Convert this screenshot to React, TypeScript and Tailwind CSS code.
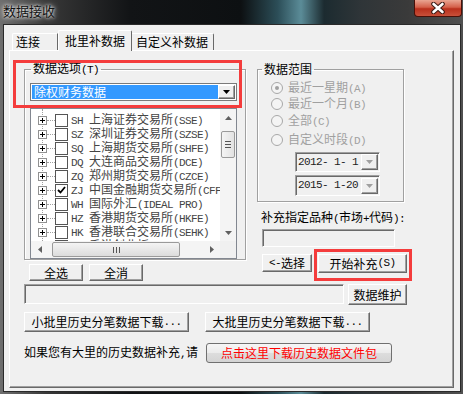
import clsx from 'clsx';
import type { ReactNode } from 'react';

const exchanges = [
  { code: 'SH', name: '上海证券交易所', en: '(SSE)' },
  { code: 'SZ', name: '深圳证券交易所', en: '(SZSE)' },
  { code: 'SQ', name: '上海期货交易所', en: '(SHFE)' },
  { code: 'DQ', name: '大连商品交易所', en: '(DCE)' },
  { code: 'ZQ', name: '郑州期货交易所', en: '(CZCE)' },
  { code: 'ZJ', name: '中国金融期货交易所', en: '(CFFEX)', checked: true },
  { code: 'WH', name: '国际外汇', en: '(IDEAL PRO)' },
  { code: 'HZ', name: '香港期货交易所', en: '(HKFE)' },
  { code: 'HK', name: '香港联合交易所', en: '(SEHK)' },
  { code: 'HG', name: '香港创业板', en: '(GEM)' },
];

const ranges = [
  { label: '最近一星期', key: '(A)', checked: true, mt: 'mt-[5px]' },
  { label: '最近一个月', key: '(B)', mt: 'mt-[2px]' },
  { label: '全部', key: '(C)', mt: 'mt-[3px]' },
  { label: '自定义时段', key: '(D)', mt: 'mt-[5px]' },
];

const raised =
  'bg-[#f0f0f0] border border-t-white border-l-white border-r-[#696969] border-b-[#696969] shadow-[inset_-1px_-1px_0_#a0a0a0]';
const sunken =
  'border border-t-[#a0a0a0] border-l-[#a0a0a0] border-r-white border-b-white shadow-[inset_1px_1px_0_#696969]';

function Lat({ children, className }: { children: ReactNode; className?: string }) {
  return (
    <span className={clsx("font-['Liberation_Mono',monospace] text-[11px] tracking-[-0.6px]", className)}>
      {children}
    </span>
  );
}

function Btn({ className, children }: { className?: string; children: ReactNode }) {
  return (
    <div className={clsx(raised, 'flex items-center justify-center leading-none text-black shrink-0', className)}>
      {children}
    </div>
  );
}

function Arrow({ dir, color = '#404040' }: { dir: 'up' | 'down' | 'left' | 'right'; color?: string }) {
  const pts = {
    up: '0,4 3.5,0 7,4',
    down: '0,0 7,0 3.5,4',
    left: '4,0 4,7 0,3.5',
    right: '0,0 0,7 4,3.5',
  }[dir];
  const vertical = dir === 'up' || dir === 'down';
  return (
    <svg width={vertical ? 7 : 4} height={vertical ? 4 : 7} viewBox={vertical ? '0 0 7 4' : '0 0 4 7'}>
      <polygon points={pts} fill={color} />
    </svg>
  );
}

function TreeRow({ code, name, en, checked }: { code: string; name: string; en: string; checked?: boolean }) {
  return (
    <div className="flex items-center h-[14px] whitespace-nowrap">
      <span className="relative w-[9px] h-[9px] border border-[#919191] bg-white shrink-0 flex items-center justify-center">
        <svg width="5" height="5" viewBox="0 0 5 5">
          <path d="M0 2.5H5M2.5 0V5" stroke="#000" strokeWidth="1" />
        </svg>
      </span>
      <span className="w-[8px] border-t border-dotted border-[#a0a0a0] shrink-0" />
      <span className="w-[13px] h-[13px] border border-[#555] bg-white shrink-0 flex items-center justify-center">
        {checked && (
          <svg width="9" height="8" viewBox="0 0 9 8">
            <path d="M1 4l2.5 2.5L8 1" stroke="#000" strokeWidth="1.8" fill="none" />
          </svg>
        )}
      </span>
      <span className="ml-[3px] text-[#444] leading-[14px]">
        <Lat>{code} </Lat>
        {name}
        <Lat>{en}</Lat>
      </span>
    </div>
  );
}

function TreeList() {
  return (
    <div className="mt-[7px] w-[207px] h-[151px] border border-[#828790] bg-white flex flex-col">
      <div className="flex h-[132px]">
        <div className="relative flex-1 overflow-hidden pt-[4px] pl-[7px]">
          <span className="absolute left-[11px] top-0 bottom-0 border-l border-dotted border-[#a0a0a0]" />
          {exchanges.map((e) => (
            <TreeRow key={e.code} {...e} />
          ))}
        </div>
        <div className="w-[16px] bg-[#f4f4f4] flex flex-col items-center">
          <div className="h-[17px] flex items-center justify-center">
            <Arrow dir="up" color="#606060" />
          </div>
          <div className="mt-[5px] w-[14px] h-[27px] rounded-[2px] border border-[#9a9a9a] bg-[linear-gradient(90deg,#f4f4f4,#e2e2e2)] flex flex-col items-center justify-center gap-[2px]">
            <span className="w-[6px] h-px bg-[#555]" />
            <span className="w-[6px] h-px bg-[#555]" />
            <span className="w-[6px] h-px bg-[#555]" />
          </div>
          <div className="flex-1" />
          <div className="h-[17px] flex items-center justify-center">
            <Arrow dir="down" color="#606060" />
          </div>
        </div>
      </div>
      <div className="flex h-[17px]">
        <div className="flex-1 bg-[#f4f4f4] flex items-center">
          <div className="w-[17px] flex items-center justify-center">
            <Arrow dir="left" color="#606060" />
          </div>
          <div className="ml-[4px] w-[128px] h-[15px] rounded-[2px] border border-[#9a9a9a] bg-[linear-gradient(180deg,#f4f4f4,#dcdcdc)] flex items-center justify-center gap-[2px]">
            <span className="w-px h-[6px] bg-[#555]" />
            <span className="w-px h-[6px] bg-[#555]" />
            <span className="w-px h-[6px] bg-[#555]" />
          </div>
          <div className="flex-1" />
          <div className="w-[17px] flex items-center justify-center">
            <Arrow dir="right" color="#606060" />
          </div>
        </div>
        <div className="w-[16px] bg-[#f0f0f0]" />
      </div>
    </div>
  );
}

function DateBox({ value, className }: { value: string; className?: string }) {
  return (
    <div className={clsx(sunken, 'ml-[33px] w-[85px] flex items-center bg-[#f0f0f0] pl-[2px] pr-px', className)}>
      <Lat className="flex-1 text-[#222] whitespace-pre">{value}</Lat>
      <div className={clsx(raised, 'w-[17px] h-[16px] flex items-center justify-center')}>
        <Arrow dir="down" color="#a0a0a0" />
      </div>
    </div>
  );
}

export default function App() {
  return (
    <div className="w-[463px] h-[394px] flex flex-col pl-[3px] pr-[2px] pb-[2px] font-['Noto_Sans_CJK_SC',sans-serif] text-[12px] text-black bg-[linear-gradient(90deg,#6f6f6f_0%,#383838_10%,#121416_28%,#0d1012_52%,#2c4e58_60%,#5b8c98_65%,#1c2b30_70%,#2f3538_78%,#3a3a3a_88%,#505050_100%)]">
      {/* Title bar */}
      <div className="h-[24px] flex items-start justify-between shrink-0">
        <span className="mt-[3px] text-[13px] leading-[16px] text-[#111] [text-shadow:0_0_6px_#fff,0_0_3px_#fff]">
          数据接收
        </span>
        <div className="w-[48px] h-[17px] -mr-px rounded-b-[4px] border border-t-0 border-[#4a1008] bg-[linear-gradient(180deg,#e9a592_0%,#d4604a_45%,#b9301c_55%,#c8503a_100%)] flex items-center justify-center">
          <svg width="14" height="12" viewBox="0 0 14 12">
            <path d="M2.5 2L11.5 10M11.5 2L2.5 10" stroke="#3a1a14" strokeWidth="4.6" strokeLinecap="round" />
            <path d="M2.5 2L11.5 10M11.5 2L2.5 10" stroke="#fff" strokeWidth="2.6" strokeLinecap="round" />
          </svg>
        </div>
      </div>

      {/* Client area */}
      <div className="flex-1 flex flex-col bg-[#f0f0f0] border border-[#2a2a2a] pt-[5px] pl-[5px] pr-[6px] pb-[3px]">
        {/* Tabs */}
        <div className="relative z-10 flex items-end h-[20px] pl-[3px] shrink-0">
          <div className="w-[46px] h-[17px] border-t border-l border-r border-t-white border-l-white border-r-[#696969] rounded-tl-[2px] pl-[3px] flex items-center">
            连接
          </div>
          <div className="w-[74px] h-[21px] -mb-px bg-[#f0f0f0] border-t border-l border-r border-t-white border-l-white border-r-[#696969] rounded-t-[2px] pl-[6px] flex items-center">
            批里补数据
          </div>
          <div className="w-[82px] h-[17px] border-t border-r border-t-white border-r-[#696969] rounded-tr-[2px] pl-[4px] flex items-center">
            自定义补数据
          </div>
        </div>

        {/* Panel */}
        <div className="flex-1 flex flex-col border border-t-white border-l-white border-r-[#696969] border-b-[#696969] shadow-[inset_-1px_-1px_0_#a0a0a0] pt-[10px] pl-[14px]">
          <div className="flex items-start">
            {/* Left column */}
            <div className="relative w-[222px] shrink-0">
              <fieldset className="h-[199px] border border-[#a0a0a0] shadow-[1px_1px_0_#fff,inset_1px_1px_0_#fff] pl-[5px] pr-[8px]">
                <legend className="ml-px px-[2px] leading-[14px]">
                  数据选项<Lat>(T)</Lat>
                </legend>
                <div className="mt-[6px] w-[207px] h-[18px] border border-[#7a7a7a] bg-white p-px flex">
                  <div className="flex-1 bg-[#3399ff] text-white leading-[14px] pl-[2px] flex items-center">
                    除权财务数据
                  </div>
                  <div className={clsx(raised, 'w-[17px] flex items-center justify-center')}>
                    <svg width="7" height="4" viewBox="0 0 7 4">
                      <polygon points="0,0 7,0 3.5,4" fill="#000" />
                    </svg>
                  </div>
                </div>
                <TreeList />
              </fieldset>
              <div className="mt-[4px] flex">
                <Btn className="ml-[5px] w-[54px] h-[17px]">全选</Btn>
                <Btn className="ml-[6px] w-[54px] h-[17px]">全消</Btn>
              </div>
              <div className="absolute left-[-11px] top-[-1px] w-[229px] h-[48px] border-[3px] border-[#f43c3c] pointer-events-none" />
            </div>

            {/* Right column */}
            <div className="ml-[11px] w-[152px] shrink-0 pt-px">
              <fieldset className="w-[147px] h-[140px] border border-[#a0a0a0] shadow-[1px_1px_0_#fff,inset_1px_1px_0_#fff] pl-[4px]">
                <legend className="px-[2px] leading-[14px]">数据范围</legend>
                {ranges.map((r) => (
                  <div key={r.label} className={clsx('ml-[9px] h-[14px] flex items-center text-[#a0a0a0]', r.mt)}>
                    <span className="w-[12px] h-[12px] rounded-full border border-[#a8a8a8] bg-[#f4f4f4] flex items-center justify-center">
                      {r.checked && <span className="w-[4px] h-[4px] rounded-full bg-[#a0a0a0]" />}
                    </span>
                    <span className="ml-[5px] leading-[14px]">
                      {r.label}
                      <Lat className="text-[10px]">{r.key}</Lat>
                    </span>
                  </div>
                ))}
                <DateBox value="2012- 1- 1" className="mt-[5px] h-[20px]" />
                <DateBox value="2015- 1-20" className="mt-[3px] h-[21px]" />
              </fieldset>
              <div className="mt-[8px] ml-[4px] leading-[14px] whitespace-nowrap">
                补充指定品种<Lat>(</Lat>市场<Lat>+</Lat>代码<Lat>):</Lat>
              </div>
              <div className={clsx(sunken, 'mt-[3px] ml-[5px] w-[133px] h-[18px] bg-[#f0f0f0]')} />
              <div className="mt-[7px] ml-[5px] flex items-start">
                <Btn className="w-[50px] h-[18px]">
                  <Lat>&lt;-</Lat>选择
                </Btn>
                <div className="relative ml-[6px]">
                  <Btn className="w-[89px] h-[19px]">
                    开始补充<Lat>(S)</Lat>
                  </Btn>
                  <div className="absolute left-[-4px] top-[-5px] w-[98px] h-[32px] border-[3px] border-[#f43c3c] pointer-events-none" />
                </div>
              </div>
            </div>
          </div>

          {/* Maintenance row */}
          <div className="mt-[3px] flex items-start">
            <div className={clsx(sunken, 'w-[320px] h-[20px] bg-[#f0f0f0]')} />
            <Btn className="ml-[4px] w-[59px] h-[21px]">数据维护</Btn>
          </div>

          {/* Download rows */}
          <div className="mt-[7px] flex gap-[16px]">
            <Btn className="w-[165px] h-[20px]">
              小批里历史分笔数据下载<Lat>...</Lat>
            </Btn>
            <Btn className="w-[165px] h-[20px]">
              大批里历史分笔数据下载<Lat>...</Lat>
            </Btn>
          </div>

          <div className="mt-[11px] flex items-center">
            <span className="w-[182px] leading-[14px] whitespace-nowrap">
              如果您有大里的历史数据补充<Lat>,</Lat>请
            </span>
            <div className="w-[186px] h-[20px] rounded-[3px] border border-[#707070] bg-[linear-gradient(180deg,#f6f6f6_0%,#ebebeb_50%,#dddddd_51%,#d4d4d4_100%)] flex items-center justify-center text-[#ff0000] leading-none">
              点击这里下载历史数据文件包
            </div>
          </div>
        </div>
      </div>
    </div>
  );
}
